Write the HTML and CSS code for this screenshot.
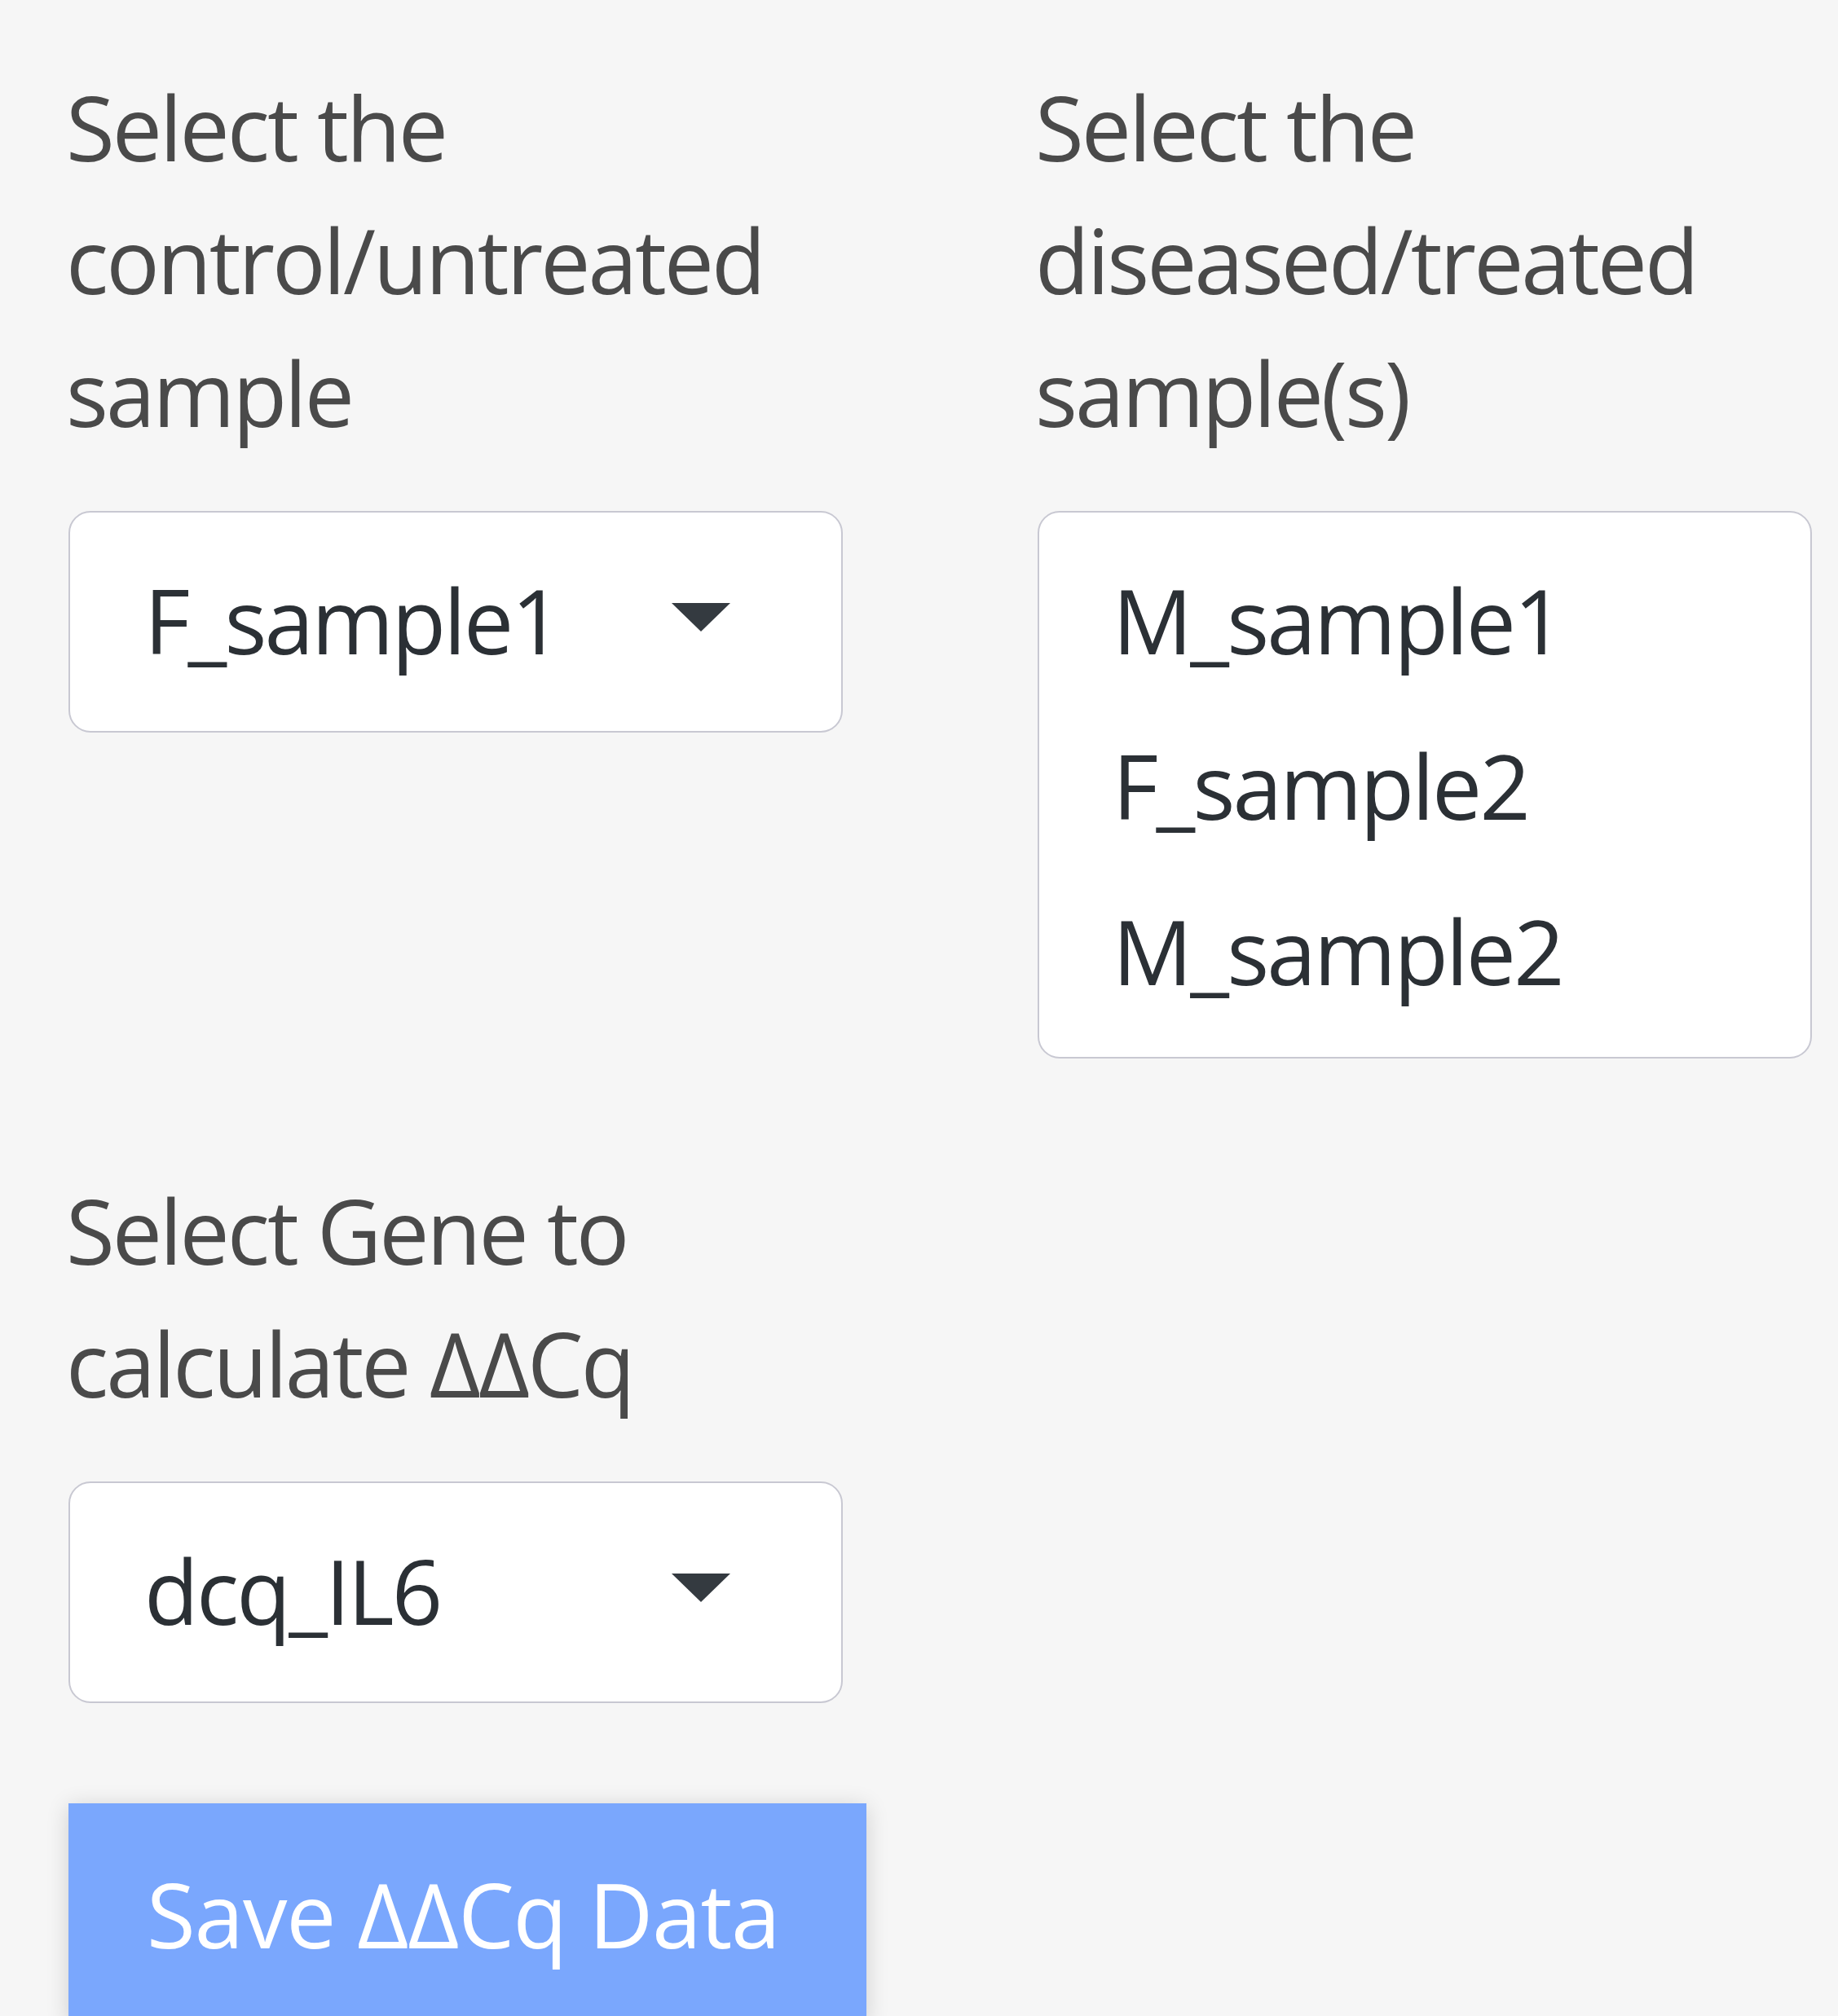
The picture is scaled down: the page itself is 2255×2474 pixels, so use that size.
FILE: index.html
```html
<!DOCTYPE html>
<html lang="en">
<head>
<meta charset="utf-8">
<title>ΔΔCq</title>
<link rel="stylesheet" href="styles.css">
</head>
<body>
<div class="panel">
  <div class="group">
    <label class="label">Select the control/untreated sample</label>
    <div class="select single">
      <span class="value">F_sample1</span>
      <span class="caret"></span>
    </div>
  </div>
  <div class="group">
    <label class="label">Select the diseased/treated sample(s)</label>
    <div class="select multi">
      <div class="option">M_sample1</div>
      <div class="option">F_sample2</div>
      <div class="option">M_sample2</div>
    </div>
  </div>
  <div class="group">
    <label class="label">Select Gene to calculate ΔΔCq</label>
    <div class="select single">
      <span class="value">dcq_IL6</span>
      <span class="caret"></span>
    </div>
    <button class="btn" disabled>Save ΔΔCq Data</button>
  </div>
</div>
</body>
</html>
```

FILE: styles.css
```css
html, body {
  margin: 0;
  padding: 0;
  background: #f6f6f6;
}

body {
  font-family: "Open Sans", "Noto Sans", sans-serif;
  font-size: 109px;
  line-height: 163px;
  height: 2474px;
  overflow: hidden;
}

.panel {
  display: grid;
  grid-template-columns: 950px 950px;
  column-gap: 239px;
  row-gap: 129px;
  align-items: start;
  padding: 74px 0 0 84px;
}

.group {
  display: flex;
  flex-direction: column;
  align-items: flex-start;
}

.label {
  display: block;
  color: #4a4a4a;
  margin: 0 0 64px -3px;
  letter-spacing: -3px;
}

.select {
  box-sizing: border-box;
  width: 950px;
  background: #ffffff;
  border: 2px solid #c8c8d2;
  border-radius: 27px;
  color: #2b3035;
  letter-spacing: -2.8px;
}

.single {
  display: flex;
  align-items: flex-start;
  justify-content: space-between;
  height: 272px;
  padding: 50px 136px 0 91px;
}

.caret {
  width: 0;
  height: 0;
  margin-top: 61px;
  border-left: 36px solid transparent;
  border-right: 36px solid transparent;
  border-top: 35px solid #343a40;
}

.multi {
  height: 672px;
  padding: 30px 0 0 90px;
}

.option {
  line-height: 203px;
}

.btn {
  margin-top: 123px;
  width: 979px;
  height: 270px;
  padding: 0 0 0 96px;
  text-align: left;
  border: none;
  border-radius: 0;
  background: #7aa7fd;
  color: #ffffff;
  font-family: inherit;
  font-size: 109px;
  line-height: 163px;
  letter-spacing: -1.2px;
  box-shadow: 0 4px 26px rgba(0, 0, 0, 0.16);
}
```
